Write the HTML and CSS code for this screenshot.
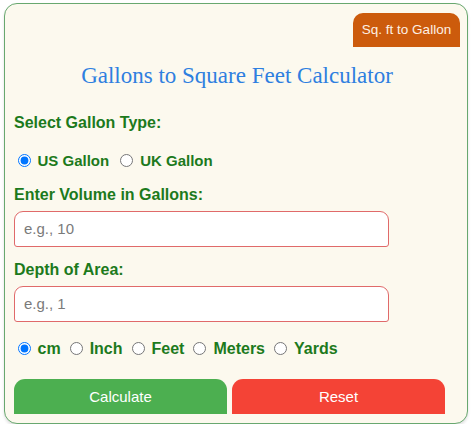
FILE: index.html
```html
<!DOCTYPE html>
<html lang="en">
<head>
    <meta charset="UTF-8">
    <meta name="viewport" content="width=device-width, initial-scale=1.0">
    <title>Gallons to Square Feet Calculator</title>
    <link rel="stylesheet" href="styles.css">
</head>
<body>
    <div class="container">
        <div class="top-bar">
            <button class="switch-btn">Sq. ft to Gallon</button>
        </div>

        <h1>Gallons to Square Feet Calculator</h1>

        <div class="label first">Select Gallon Type:</div>
        <div class="radio-row gallons">
            <label class="option"><input type="radio" name="gallon" checked><span>US Gallon</span></label>
            <label class="option"><input type="radio" name="gallon"><span>UK Gallon</span></label>
        </div>

        <div class="label">Enter Volume in Gallons:</div>
        <input type="text" class="field" placeholder="e.g., 10">

        <div class="label">Depth of Area:</div>
        <input type="text" class="field" placeholder="e.g., 1">

        <div class="radio-row units">
            <label class="option"><input type="radio" name="unit" checked><span>cm</span></label>
            <label class="option"><input type="radio" name="unit"><span>Inch</span></label>
            <label class="option"><input type="radio" name="unit"><span>Feet</span></label>
            <label class="option"><input type="radio" name="unit"><span>Meters</span></label>
            <label class="option"><input type="radio" name="unit"><span>Yards</span></label>
        </div>

        <div class="actions">
            <button class="calc-btn">Calculate</button>
            <button class="reset-btn">Reset</button>
        </div>
    </div>
</body>
</html>
```

FILE: styles.css
```css
* { box-sizing: border-box; }
body {
    margin: 0;
    background: #ffffff;
    font-family: "Liberation Sans", Arial, sans-serif;
}
.container {
    width: 464px;
    height: 421px;
    margin: 3px 0 0 4px;
    padding: 8.5px 7px 0 9px;
    background: #fcf9ee;
    border: 1.5px solid #68a86f;
    border-radius: 13px;
    box-shadow: 0 2px 3px rgba(0,0,0,0.12);
}
.top-bar {
    display: flex;
    justify-content: flex-end;
}
.switch-btn {
    width: 107px;
    height: 34px;
    padding: 0;
    border: none;
    border-radius: 10px 10px 0 0;
    background: #cc5b0c;
    color: #fdf0e4;
    font-family: "Liberation Sans", Arial, sans-serif;
    font-size: 13.5px;
}
h1 {
    margin: 14px 0 0;
    text-align: center;
    font-family: "Liberation Serif", "Times New Roman", serif;
    font-weight: normal;
    font-size: 23px;
    line-height: 30px;
    color: #2e7fe0;
}
.label {
    margin-top: 14px;
    font-size: 16px;
    font-weight: bold;
    line-height: 18px;
    color: #1c7a1c;
}
.label.first { margin-top: 23px; }
.radio-row {
    display: flex;
    gap: 9px;
    margin: 20px 0 16px;
    padding-left: 3.5px;
    font-size: 16px;
    font-weight: bold;
    line-height: 18px;
    color: #1c7a1c;
}
.radio-row.gallons {
    font-size: 15px;
    gap: 11px;
}
.option {
    display: flex;
    align-items: center;
    gap: 7px;
}
.option input {
    margin: 0;
    width: 13px;
    height: 13px;
}
.field {
    display: block;
    width: 375px;
    height: 36px;
    margin-top: 7px;
    padding: 0 9px;
    border: 1.5px solid #e06a6a;
    border-radius: 9px 9px 3px 3px;
    background: #ffffff;
    font-family: "Liberation Sans", Arial, sans-serif;
    font-size: 15px;
}
.field::placeholder { color: #7a7a7a; }
.radio-row.units { margin: 18px 0 21px; }
.actions {
    display: flex;
    gap: 5px;
    width: 431px;
}
.actions button {
    flex: 1;
    height: 35px;
    border: none;
    border-radius: 11px 11px 0 0;
    color: #ffffff;
    font-family: "Liberation Sans", Arial, sans-serif;
    font-size: 15px;
}
.calc-btn { background: #4caf50; }
.reset-btn { background: #f44336; }
```
